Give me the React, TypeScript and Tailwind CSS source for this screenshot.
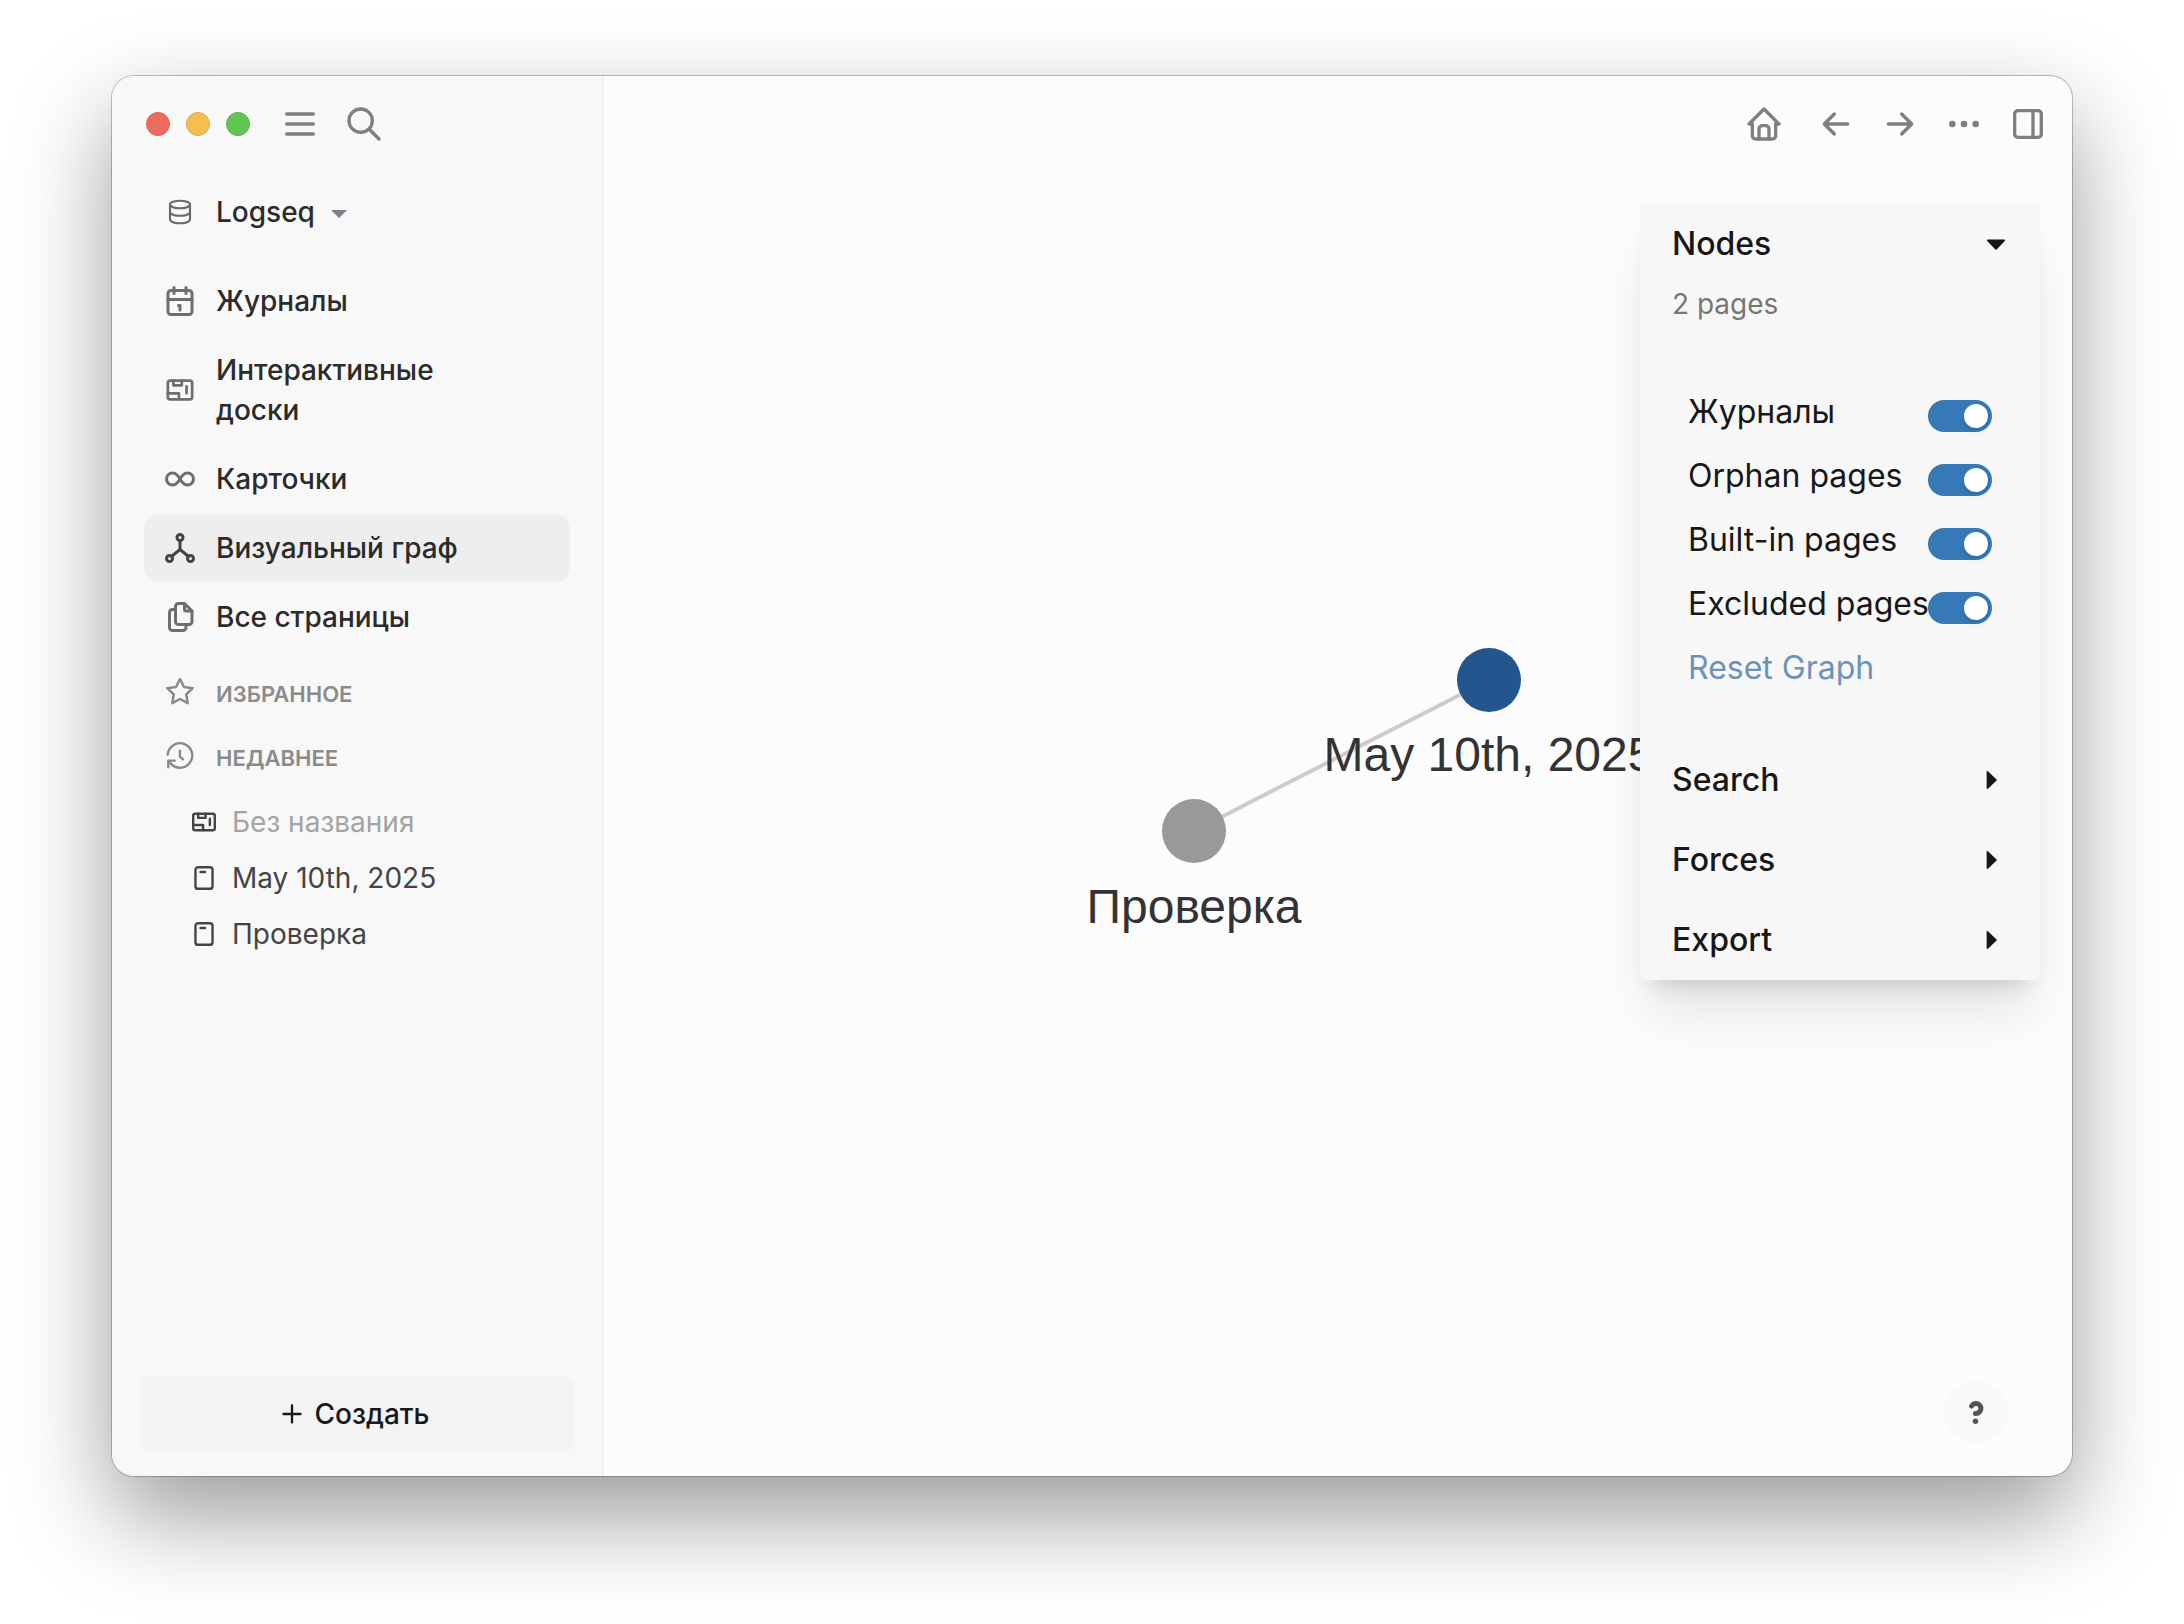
import type { ReactNode } from 'react'
import { useState } from 'react'

type IconProps = { children: ReactNode; className?: string; stroke?: number }

function Icon({ children, className = 'size-10', stroke = 2 }: IconProps) {
  return (
    <svg
      viewBox="0 0 24 24"
      className={`shrink-0 ${className}`}
      fill="none"
      stroke="currentColor"
      strokeWidth={stroke}
      strokeLinecap="round"
      strokeLinejoin="round"
      aria-hidden="true"
    >
      {children}
    </svg>
  )
}

const whiteboard = (
  <>
    <rect x="3.9" y="5.8" width="16.2" height="12.4" rx="1.6" />
    <path d="M7.6 5.8v3.1h5.6V5.8M3.9 14.2h7.4v4M16.4 9.6v4.6" />
  </>
)

const navItems = [
  {
    label: 'Журналы',
    icon: (
      <>
        <rect x="4" y="5" width="16" height="16" rx="2" />
        <path d="M16 3v4M8 3v4M4 11h16M11 15h1v3" />
      </>
    ),
  },
  { label: 'Интерактивные доски', icon: whiteboard, stroke: 1.8 },
  {
    label: 'Карточки',
    icon: (
      <path d="M9.828 9.172a4 4 0 1 0 0 5.656a10 10 0 0 0 2.172 -2.828a10 10 0 0 1 2.172 -2.828a4 4 0 1 1 0 5.656a10 10 0 0 1 -2.172 -2.828a10 10 0 0 0 -2.172 -2.828" />
    ),
  },
  {
    label: 'Визуальный граф',
    active: true,
    icon: (
      <>
        <circle cx="12" cy="5" r="2" />
        <circle cx="5" cy="19" r="2" />
        <circle cx="19" cy="19" r="2" />
        <path d="M6.5 17.5l5.5 -4.5l5.5 4.5M12 7v6" />
      </>
    ),
  },
  {
    label: 'Все страницы',
    icon: (
      <>
        <path d="M15 3v4a1 1 0 0 0 1 1h4" />
        <path d="M18 17h-7a2 2 0 0 1 -2 -2v-10a2 2 0 0 1 2 -2h4l5 5v7a2 2 0 0 1 -2 2z" />
        <path d="M16 17v2a2 2 0 0 1 -2 2h-7a2 2 0 0 1 -2 -2v-10a2 2 0 0 1 2 -2h2" />
      </>
    ),
  },
]

const pageIcon = (
  <>
    <rect x="5.6" y="3.9" width="12.8" height="16.2" rx="2" />
    <path d="M9.4 7.5h3.4" />
  </>
)

const recentItems = [
  { label: 'Без названия', icon: whiteboard, muted: true },
  { label: 'May 10th, 2025', icon: pageIcon },
  { label: 'Проверка', icon: pageIcon },
]

const toolbar = [
  {
    label: 'Home',
    icon: (
      <>
        <path d="M5 12H3l9 -9l9 9h-2" />
        <path d="M5 12v7a2 2 0 0 0 2 2h10a2 2 0 0 0 2 -2v-7" />
        <path d="M9 21v-6a2 2 0 0 1 2 -2h2a2 2 0 0 1 2 2v6" />
      </>
    ),
  },
  { label: 'Back', icon: <path d="M5 12h14M5 12l6 6M5 12l6 -6" /> },
  { label: 'Forward', icon: <path d="M5 12h14M13 18l6 -6M13 6l6 6" /> },
  {
    label: 'More',
    icon: (
      <>
        <circle cx="5" cy="12" r="1" />
        <circle cx="12" cy="12" r="1" />
        <circle cx="19" cy="12" r="1" />
      </>
    ),
  },
  {
    label: 'Toggle right sidebar',
    icon: (
      <>
        <rect x="4" y="4" width="16" height="16" rx="2" />
        <path d="M15 4v16" />
      </>
    ),
  },
]

function Sidebar() {
  return (
    <aside className="flex w-[492px] shrink-0 flex-col border-r-2 border-[#f1f1f1] bg-[#f8f8f8]">
      <div className="flex h-24 items-center pl-[34px] text-[#7f7f7f]">
        <div className="flex gap-4">
          <button aria-label="Close" className="size-6 rounded-full border border-[#dd5e55] bg-[#ed6a5e]" />
          <button aria-label="Minimize" className="size-6 rounded-full border border-[#dda94a] bg-[#f5bf4f]" />
          <button aria-label="Zoom" className="size-6 rounded-full border border-[#58b04a] bg-[#61c554]" />
        </div>
        <div className="ml-[30px] flex gap-6">
          <button aria-label="Toggle left sidebar">
            <Icon>
              <path d="M4 6h16M4 12h16M4 18h16" />
            </Icon>
          </button>
          <button aria-label="Search">
            <Icon>
              <circle cx="10" cy="10" r="7" />
              <path d="M21 21l-6 -6" />
            </Icon>
          </button>
        </div>
      </div>

      <div className="flex flex-col px-8 text-[28px] leading-10 text-[#2b2b2b]">
        <button className="mt-2 flex h-16 items-center px-[18px] font-medium">
          <span className="flex w-9 justify-center text-[#6b6b6b]">
            <Icon className="size-[30px]" stroke={1.7}>
              <ellipse cx="12" cy="6" rx="8" ry="3" />
              <path d="M4 6v6a8 3 0 0 0 16 0V6" />
              <path d="M4 12v6a8 3 0 0 0 16 0v-6" />
            </Icon>
          </span>
          <span className="ml-[18px]">Logseq</span>
          <svg viewBox="0 0 16 8" className="mt-1 ml-4 h-2 w-4" fill="#7d7f8c" aria-hidden="true">
            <path d="M0 0h16L8 8z" />
          </svg>
        </button>

        <nav className="mt-6 flex flex-col gap-[3px]">
          {navItems.map((item) => (
            <a
              key={item.label}
              href="#"
              className={`flex items-center rounded-xl px-[18px] py-[13px] font-medium ${
                item.active ? 'bg-[#eeeeee]' : ''
              }`}
            >
              <Icon
                className={item.active ? 'size-9 text-[#444444]' : 'size-9 text-[#6e6e6e]'}
                stroke={item.stroke}
              >
                {item.icon}
              </Icon>
              <span className="ml-[18px] max-w-[260px]">{item.label}</span>
            </a>
          ))}
        </nav>

        <section className="mt-3 text-[22px] font-semibold text-[#8b8b8b]">
          <h2 className="flex h-16 items-center px-[18px]">
            <span className="flex w-9 justify-center">
              <Icon className="size-8" stroke={1.9}>
                <path d="M12 15.75l-5.8 3.1l1.1 -6.6l-4.8 -4.6l6.5 -.9l3 -6l3 6l6.5 .9l-4.8 4.6l1.1 6.6z" />
              </Icon>
            </span>
            <span className="ml-[18px]">ИЗБРАННОЕ</span>
          </h2>
          <h2 className="flex h-16 items-center px-[18px]">
            <span className="flex w-9 justify-center">
              <Icon className="size-8" stroke={1.8}>
                <path d="M2.8 9.6A9.2 9.2 0 1 1 4.2 15" />
                <path d="M8 14H3.2v5" />
                <path d="M11.9 6.6v4.3l2.4 2.2" />
              </Icon>
            </span>
            <span className="ml-[18px]">НЕДАВНЕЕ</span>
          </h2>
        </section>

        <ul className="mt-1 text-[#444444]">
          {recentItems.map((item) => (
            <li key={item.label}>
              <a href="#" className="flex h-14 items-center pl-11">
                <Icon className="size-8" stroke={1.8}>
                  {item.icon}
                </Icon>
                <span className={item.muted ? 'ml-3 text-[#a3a3a3]' : 'ml-3'}>{item.label}</span>
              </a>
            </li>
          ))}
        </ul>
      </div>

      <div className="mt-auto px-7 pb-6">
        <button className="flex h-[76px] w-full items-center justify-center rounded-xl bg-[#f3f3f3] pr-[6px] text-[28px] leading-10 font-medium text-[#18181b]">
          <Icon className="mr-2 size-7" stroke={2}>
            <path d="M12 4.7v14.6M4.7 12h14.6" />
          </Icon>
          Создать
        </button>
      </div>
    </aside>
  )
}

function Toggle({ label }: { label: string }) {
  const [on, setOn] = useState(true)
  return (
    <label className="flex h-12 items-start justify-between whitespace-nowrap">
      <span className="w-0 flex-1">{label}</span>
      <input
        type="checkbox"
        checked={on}
        onChange={() => setOn(!on)}
        className="mt-3 h-8 w-16 shrink-0 appearance-none rounded-full bg-[#c4c4c4] p-1 before:block before:size-6 before:rounded-full before:bg-white before:shadow-md checked:bg-[#357ab6] checked:before:ml-8"
      />
    </label>
  )
}

function GraphPanel() {
  return (
    <div className="absolute top-32 right-8 w-[400px] rounded-b-lg bg-[#f7f7f7] text-[32px] leading-12 text-[#171717] shadow-[0_40px_50px_-10px_rgba(0,0,0,0.1),0_16px_20px_-12px_rgba(0,0,0,0.14)]">
      <section className="h-[536px] px-8 pt-4">
        <button className="flex w-full items-center justify-between font-medium">
          Nodes
          <svg viewBox="0 0 20 12" className="mt-[2px] mr-[2px] h-3 w-5" fill="currentColor" aria-hidden="true">
            <path d="M1.6 .6h16.8q1.2 .3 .4 1.3L10.6 10.6q-.6 .6-1.2 0L1.2 1.9Q.4 .9 1.6 .6z" />
          </svg>
        </button>
        <p className="mt-4 text-[28px] leading-10 text-[#78776f]">2 pages</p>
        <div className="mt-16 mr-4 ml-4 flex flex-col items-stretch gap-4">
          <Toggle label="Журналы" />
          <Toggle label="Orphan pages" />
          <Toggle label="Built-in pages" />
          <Toggle label="Excluded pages" />
          <button className="self-start text-[#6b93b8]">Reset Graph</button>
        </div>
      </section>
      {['Search', 'Forces', 'Export'].map((title) => (
        <section key={title} className="px-8 py-4">
          <button className="flex w-full items-center justify-between font-medium">
            {title}
            <svg viewBox="0 0 12 20" className="mr-[10px] h-5 w-3" fill="currentColor" aria-hidden="true">
              <path d="M.6 1.6v16.8q.3 1.2 1.3 .4L10.6 10.6q.6 -.6 0 -1.2L1.9 1.2Q.9 .4 .6 1.6z" />
            </svg>
          </button>
        </section>
      ))}
    </div>
  )
}

function Graph() {
  return (
    <div className="absolute inset-0 overflow-hidden font-['Liberation_Sans',Arial,sans-serif] text-[48px] leading-14 whitespace-nowrap text-[#333333]">
      <svg className="absolute inset-0 size-full" aria-hidden="true">
        <line x1="590" y1="755" x2="885" y2="604" stroke="#cccccc" strokeWidth="4" />
        <circle cx="590" cy="755" r="32" fill="#999999" />
        <circle cx="885" cy="604" r="32" fill="#23568f" />
      </svg>
      <span className="absolute top-[651px] left-[885px] -translate-x-1/2">May 10th, 2025</span>
      <span className="absolute top-[803px] left-[590px] -translate-x-1/2">Проверка</span>
    </div>
  )
}

export default function App() {
  return (
    <div className="flex min-h-screen bg-white px-28 pt-[76px] pb-[148px] font-['Inter',sans-serif]">
      <div className="flex flex-1 overflow-hidden rounded-[22px] bg-[#fcfcfc] shadow-[0_0_0_1px_rgba(0,0,0,0.2),0_0_2px_rgba(0,0,0,0.15),0_40px_96px_rgba(0,0,0,0.4)]">
        <Sidebar />
        <main className="relative min-w-0 flex-1">
          <Graph />
          <header className="relative flex h-24 items-center justify-end gap-6 pr-6 text-[#7f7f7f]">
            {toolbar.map((item, i) => (
              <button key={item.label} aria-label={item.label} className={i === 0 ? 'mr-2' : ''}>
                <Icon>{item.icon}</Icon>
              </button>
            ))}
          </header>
          <GraphPanel />
          <button
            aria-label="Help"
            className="absolute right-16 bottom-8 flex size-16 items-center justify-center rounded-full bg-[#f9f9f9] text-[#555555]"
          >
            <svg viewBox="0 0 15 23" className="h-[23px] w-[15px]" fill="none" stroke="currentColor" aria-hidden="true">
              <path
                d="M2.6 5C4 3.2 5.6 2.6 7 2.6a4.9 4.9 0 0 1 0 9.9h-.6"
                strokeWidth="5"
                strokeLinecap="round"
              />
              <circle cx="6.5" cy="20.2" r="2.7" fill="currentColor" stroke="none" />
            </svg>
          </button>
        </main>
      </div>
    </div>
  )
}
